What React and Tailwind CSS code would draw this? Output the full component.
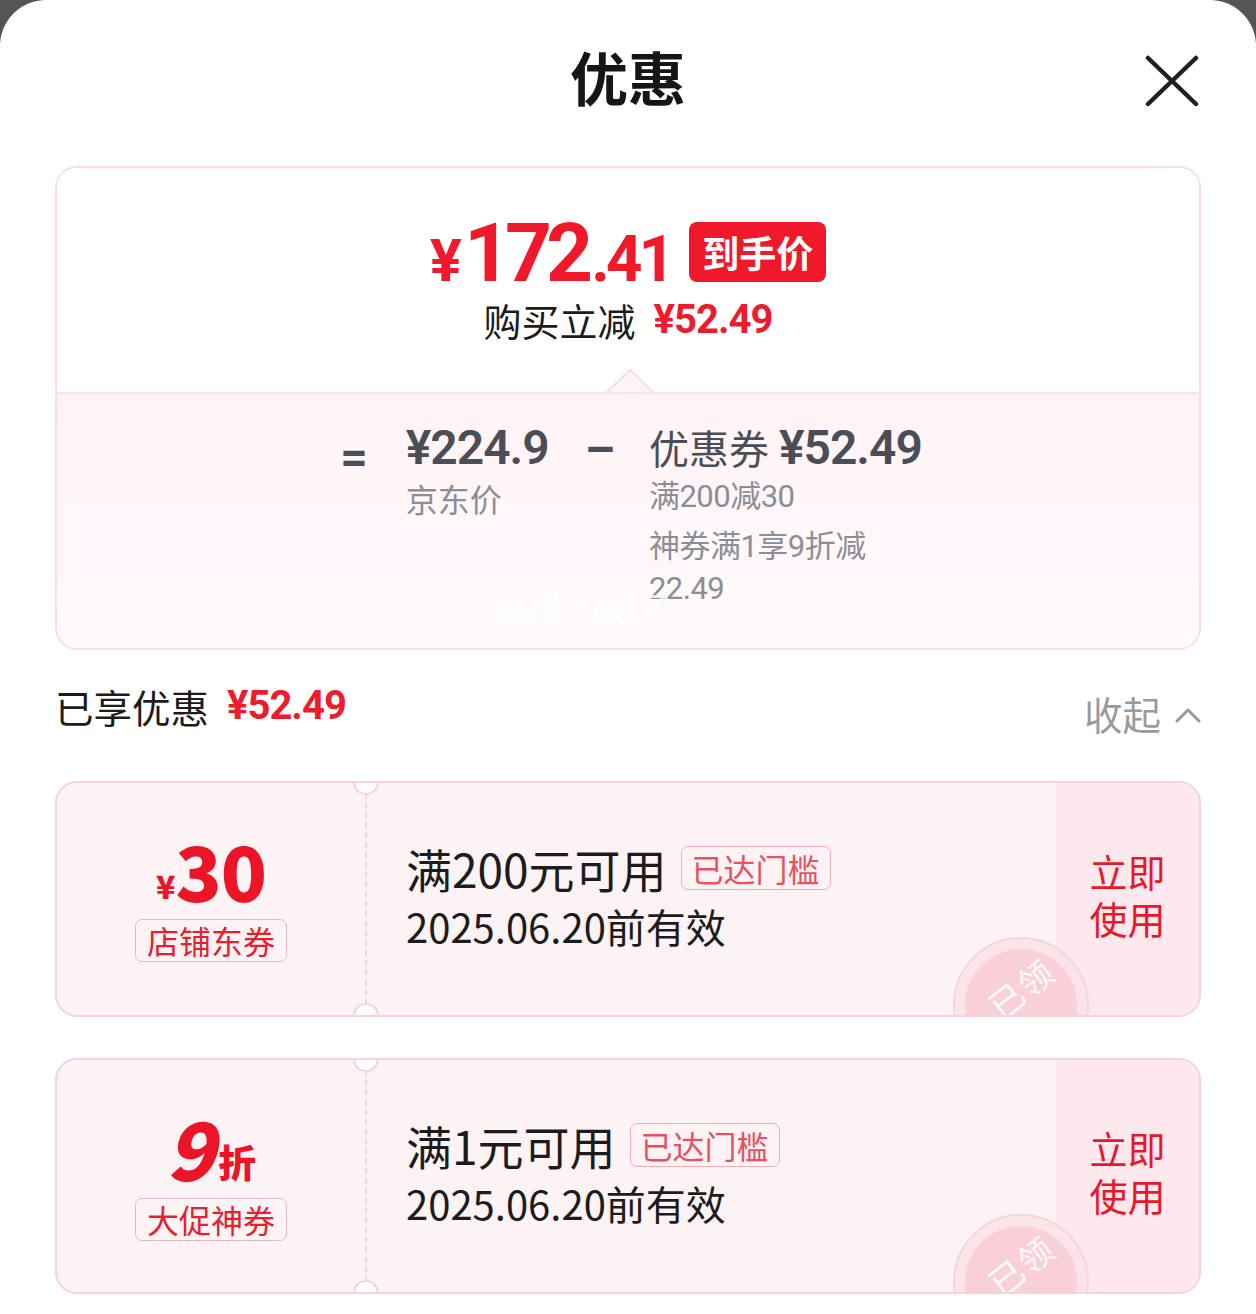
import React from 'react'

const CN = "font-['Noto_Sans_CJK_SC',sans-serif]"
const NUM = "font-['Roboto','Noto_Sans_CJK_SC',sans-serif]"

const CloseIcon = () => (
  <svg width="54" height="52" viewBox="0 0 54 52" fill="none">
    <path d="M3 3 L51 49 M51 3 L3 49" stroke="#1f1f1f" strokeWidth="4.5" strokeLinecap="round" />
  </svg>
)

const ChevronUp = () => (
  <svg width="26" height="18" viewBox="0 0 26 18" fill="none">
    <path d="M2 15 L13 4 L24 15" stroke="#9a9a9a" strokeWidth="3" strokeLinecap="round" strokeLinejoin="round" />
  </svg>
)

// faded "已领" stamp, clipped by the coupon's bottom edge
const Stamp = () => (
  <div className="absolute left-[896px] top-[154px] w-[136px] h-[136px] rounded-full bg-[#fbe3e8]/90 border-2 border-[#f8d3da] flex items-center justify-center">
    <div className="w-[112px] h-[112px] rounded-full bg-[#f9cdd6]/90 flex items-center justify-center">
      <span className={`${CN} text-[34px] text-white/90 -rotate-[38deg] -translate-y-[18px] tracking-[2px] whitespace-nowrap`}>已领</span>
    </div>
  </div>
)

const Coupon = ({ left, tag, title, className = '' }) => (
  <div className={`relative h-[236px] rounded-[22px] border-2 border-[#f6d2d9] bg-[#fdf3f5] flex overflow-hidden ${className}`}>
    <div className="w-[308px] flex flex-col items-center justify-center pb-[6px]">
      {left}
      <div className={`${CN} mt-[12px] h-[43px] px-[11px] rounded-[7px] border-[1.5px] border-[#e9b8c0] flex items-center text-[32px] text-[#e51f30] leading-none`}>
        {tag}
      </div>
    </div>
    <div className="border-l-2 border-dashed border-[#f1d5da] my-[10px]" />
    <div className="absolute left-[296px] -top-[14px] w-[26px] h-[26px] rounded-full bg-white border-2 border-[#f6d2d9]" />
    <div className="absolute left-[296px] -bottom-[14px] w-[26px] h-[26px] rounded-full bg-white border-2 border-[#f6d2d9]" />
    <div className="flex-1 flex flex-col justify-center pl-[39px] pb-[8px]">
      <div className="flex items-center gap-[14px]">
        <span className={`${CN} text-[46px] text-[#1c1c1c] leading-none`}>{title}</span>
        <span className={`${CN} h-[44px] px-[10px] rounded-[7px] border-[1.5px] border-[#f3abb6] flex items-center text-[32px] text-[#e8515f] leading-none`}>已达门槛</span>
      </div>
      <div className={`${CN} mt-[15px] text-[40px] text-[#1c1c1c] leading-none`}>2025.06.20前有效</div>
    </div>
    <div className="w-[143px] bg-[#fde8ed] flex items-center justify-center pb-[10px]">
      <div className={`${CN} text-[38px] leading-[47px] text-[#e5192b] text-center`}>立即<br />使用</div>
    </div>
    <Stamp />
  </div>
)

export default function App() {
  return (
    <div className="w-[1256px] h-[1314px] bg-[#555555] overflow-hidden">
      <div className="h-full bg-white rounded-t-[46px] px-[55px]">
        <div className="relative h-[166px] flex justify-center pt-[47px]">
          <h1 className={`${CN} text-[58px] font-bold text-[#161616] leading-none`}>优惠</h1>
          <div className="absolute right-[2px] top-[55px]"><CloseIcon /></div>
        </div>

        <div className="rounded-[22px] border-2 border-[#fbdde3] overflow-hidden">
          <div className="relative h-[224px] bg-white flex flex-col items-center pt-[44px]">
            <div className="flex items-end">
              <span className={`${NUM} font-bold text-[#f0182b] text-[60px] leading-none mb-[3px]`}>¥</span>
              <span className={`${NUM} font-bold text-[#f0182b] text-[82px] leading-none ml-[2px] tracking-[-6px]`}>172</span>
              <span className={`${NUM} font-bold text-[#f0182b] text-[64px] leading-none mb-[2px] ml-[4px] tracking-[-4px]`}>.41</span>
              <span className={`${CN} ml-[18px] mb-[12px] h-[60px] px-[13px] rounded-[8px] bg-[#f0182b] text-white text-[37px] font-bold flex items-center leading-none`}>到手价</span>
            </div>
            <div className="flex items-center mt-[6px]">
              <span className={`${CN} text-[38px] text-[#1c1c1c] leading-none`}>购买立减</span>
              <span className={`${NUM} ml-[18px] text-[40px] font-bold text-[#ec1c2e] leading-none tracking-[-1px]`}>¥52.49</span>
            </div>
            <svg className="absolute left-[548px] bottom-[-2px]" width="50" height="26" viewBox="0 0 50 26" fill="none">
              <path d="M1 25 L25 2 L49 25 Z" fill="#fff4f6" stroke="#fbdde3" strokeWidth="2" />
              <path d="M0 25 L50 25" stroke="#fff4f6" strokeWidth="3" />
            </svg>
          </div>
          <div className="relative h-[256px] border-t-2 border-[#fbe2e7] bg-gradient-to-b from-[#fff3f5] to-[#fffafb] flex justify-center pt-[30px] pl-[6px]">
            <span className={`${NUM} text-[48px] font-bold text-[#4b4e57] leading-none mt-[10px]`}>=</span>
            <div className="ml-[38px] flex flex-col">
              <span className={`${NUM} text-[48px] font-semibold text-[#4b4e57] leading-none tracking-[-1px]`}>¥224.9</span>
              <span className={`${CN} mt-[10px] text-[32px] text-[#8b8e97] leading-none`}>京东价</span>
            </div>
            <span className={`${NUM} ml-[36px] text-[48px] font-bold text-[#4b4e57] leading-none mt-[2px]`}>–</span>
            <div className="ml-[34px] flex flex-col whitespace-nowrap">
              <div className="flex items-baseline leading-none">
                <span className={`${CN} text-[40px] text-[#4b4e57]`}>优惠券</span>
                <span className={`${NUM} ml-[10px] text-[48px] font-semibold text-[#4b4e57] tracking-[-1px]`}>¥52.49</span>
              </div>
              <span className={`${NUM} mt-[9px] text-[31px] text-[#8b8e97] leading-none tracking-[-0.5px]`}>满200减30</span>
              <span className={`${NUM} mt-[14px] text-[31px] text-[#8b8e97] leading-[42px] tracking-[-0.5px]`}>神券满1享9折减<br />22.49</span>
            </div>
            <span className={`${CN} absolute left-[434px] top-[196px] text-[36px] text-white/80 leading-none`}>暴躁的橘子</span>
          </div>
        </div>

        <div className="flex items-center justify-between mt-[36px] h-[40px]">
          <div className="flex items-center">
            <span className={`${CN} text-[38.5px] text-[#1c1c1c] leading-none`}>已享优惠</span>
            <span className={`${NUM} ml-[18px] text-[40px] font-bold text-[#ec1c2e] leading-none tracking-[-1px]`}>¥52.49</span>
          </div>
          <div className="flex items-center mt-[14px]">
            <span className={`${CN} text-[38.5px] text-[#9a9a9a] leading-none`}>收起</span>
            <span className="ml-[14px] mt-[4px]"><ChevronUp /></span>
          </div>
        </div>

        <Coupon
          className="mt-[55px]"
          tag="店铺东券"
          title="满200元可用"
          left={
            <div className="flex items-end text-[#ec1527] leading-none">
              <span className={`${CN} text-[32px] font-black mb-[6px]`}>¥</span>
              <span className={`${CN} text-[76px] font-black tracking-[-1px]`}>30</span>
            </div>
          }
        />
        <Coupon
          className="mt-[41px]"
          tag="大促神券"
          title="满1元可用"
          left={
            <div className="flex items-end text-[#ec1527] leading-none">
              <span className={`${CN} text-[80px] font-black italic`}>9</span>
              <span className={`${CN} text-[38px] font-black ml-[4px] mb-[6px]`}>折</span>
            </div>
          }
        />
      </div>
    </div>
  )
}
